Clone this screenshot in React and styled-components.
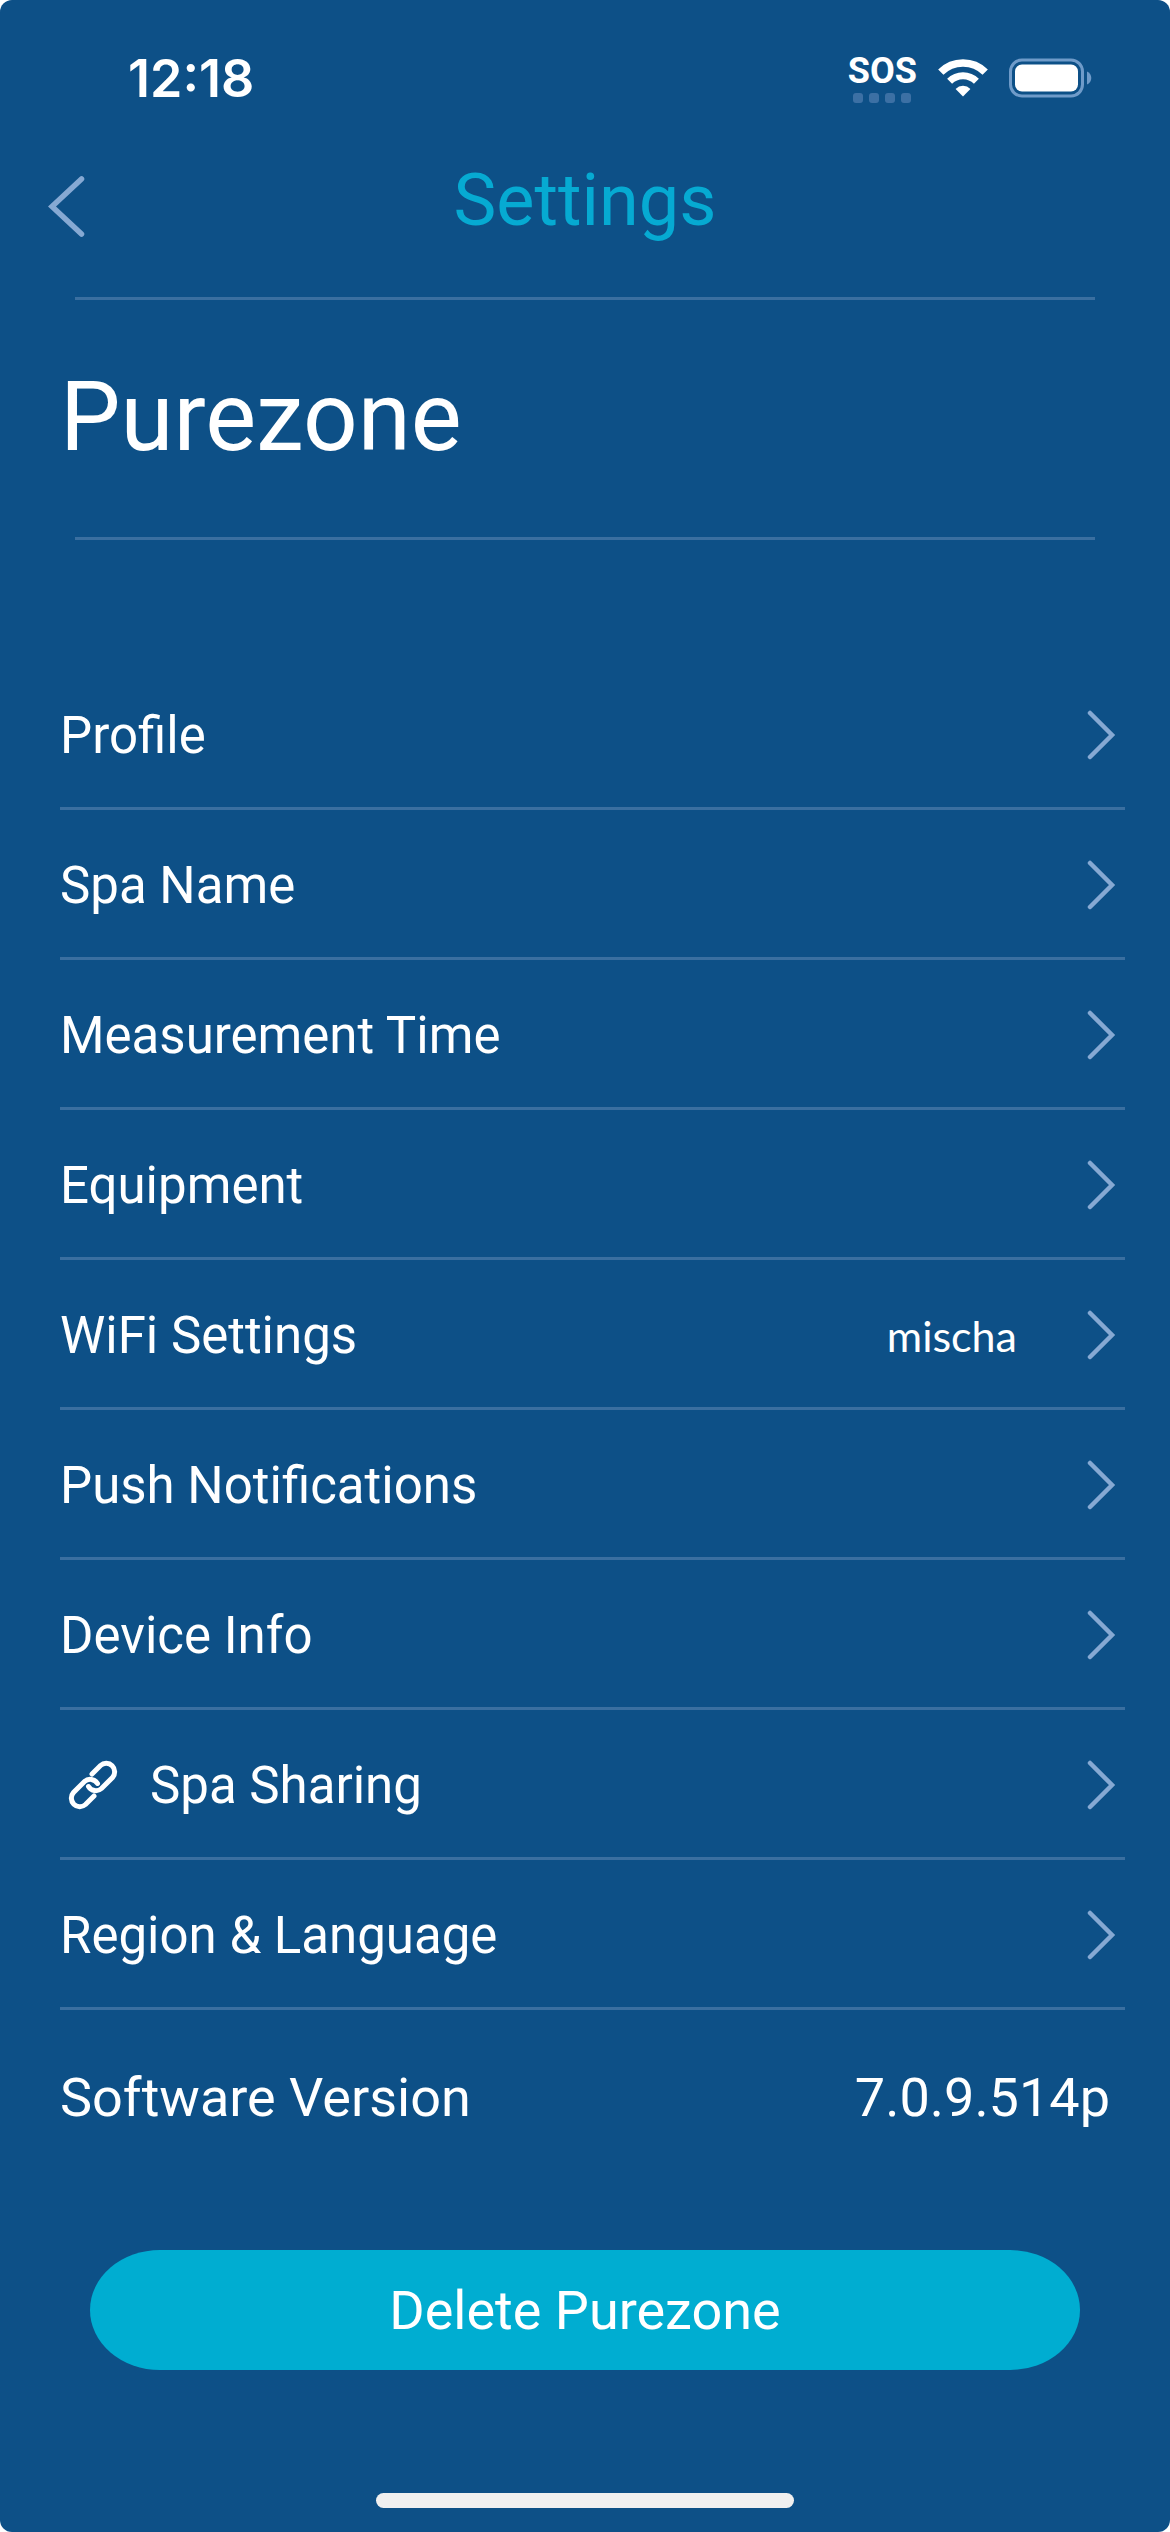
import React from 'react'
import styled, { createGlobalStyle } from 'styled-components'

const rows = [
  { id: 1, title: 'Profile' },
  { id: 2, title: 'Spa Name' },
  { id: 3, title: 'Measurement Time' },
  { id: 4, title: 'Equipment' },
  { id: 5, title: 'WiFi Settings', value: 'mischa' },
  { id: 6, title: 'Push Notifications' },
  { id: 7, title: 'Device Info' },
  { id: 8, title: 'Spa Sharing', shared: true },
  { id: 9, title: 'Region & Language' },
]

function WifiIcon() {
  return (
    <svg width="50" height="38" viewBox="0 0 50 38" fill="none" aria-hidden="true">
      <path d="M2.8 13.2a31.5 31.5 0 0 1 44.4 0" stroke="#fff" strokeWidth="7.5" />
      <path d="M11.6 22.2a19 19 0 0 1 26.8 0" stroke="#fff" strokeWidth="7" />
      <path d="M25 37.5l-7.4-7.6a10.4 10.4 0 0 1 14.8 0z" fill="#fff" />
    </svg>
  )
}

function BatteryIcon() {
  return (
    <svg width="83" height="40" viewBox="0 0 83 40" fill="none" aria-hidden="true">
      <rect x="1.5" y="2" width="72" height="36" rx="11.5" stroke="#6f9bc9" strokeWidth="3" />
      <rect x="6" y="6.5" width="63" height="27" rx="7" fill="#fff" />
      <path d="M78 13.5c2.6 1 4.3 3.6 4.3 6.5s-1.7 5.5-4.3 6.5z" fill="#6f9bc9" />
    </svg>
  )
}

function BackIcon() {
  return (
    <svg width="37" height="63" viewBox="0 0 37 63" fill="none" aria-hidden="true">
      <path d="M33.5 4L4 31.5 33.5 59" stroke="#86a9d3" strokeWidth="5.5" strokeLinecap="round" />
    </svg>
  )
}

function ChevronIcon() {
  return (
    <svg width="30" height="50" viewBox="0 0 30 50" fill="none" aria-hidden="true">
      <path d="M4 3L26 25 4 47" stroke="#86a9d3" strokeWidth="4.5" strokeLinecap="round" />
    </svg>
  )
}

function LinkIcon() {
  return (
    <svg width="50" height="50" viewBox="0 0 50 50" fill="none" aria-hidden="true">
      <g stroke="#fff" strokeWidth="5" strokeLinecap="round">
        <path d="M24 14L32.5 5.5A8.5 8.5 0 0 1 44.5 17.5L33.5 28.5A8.5 8.5 0 0 1 20.5 26.5" />
        <path d="M26 36L17.5 44.5A8.5 8.5 0 0 1 5.5 32.5L16.5 21.5A8.5 8.5 0 0 1 29.5 23.5" />
      </g>
    </svg>
  )
}

export default function App() {
  return (
    <>
      <GlobalStyle />
      <Screen>
        <StatusBar>
          <Time>12:18</Time>
          <StatusIcons>
            <Signal>
              <span>SOS</span>
              <Dots>
                <i /><i /><i /><i />
              </Dots>
            </Signal>
            <WifiIcon />
            <BatteryIcon />
          </StatusIcons>
        </StatusBar>
        <Header>
          <BackButton aria-label="Back">
            <BackIcon />
          </BackButton>
          <Title>Settings</Title>
        </Header>
        <SpaHeading>Purezone</SpaHeading>
        <List>
          {rows.map((row) => (
            <li key={row.id}>
              <Row>
                {row.shared && <LinkWrap><LinkIcon /></LinkWrap>}
                <Label>{row.title}</Label>
                {row.value && <Value>{row.value}</Value>}
                <ChevronIcon />
              </Row>
            </li>
          ))}
        </List>
        <Version>
          <span>Software Version</span>
          <span>7.0.9.514p</span>
        </Version>
        <DeleteButton>Delete Purezone</DeleteButton>
        <HomeBar />
      </Screen>
    </>
  )
}

const GlobalStyle = createGlobalStyle`
  * {
    box-sizing: border-box;
  }
  body {
    margin: 0;
    background: #fff;
  }
  button {
    border: 0;
    padding: 0;
    background: none;
    color: inherit;
    font-family: inherit;
    cursor: pointer;
  }
  svg {
    display: block;
    flex: none;
  }
`

const Screen = styled.div`
  display: flex;
  flex-direction: column;
  min-height: 100vh;
  border-radius: 12px;
  background: #0d5087;
  color: #fff;
  font-family: Roboto, sans-serif;
`

const StatusBar = styled.div`
  display: flex;
  justify-content: space-between;
  align-items: center;
  height: 156px;
  padding: 0 78px 0 128px;
`

const Time = styled.span`
  font-family: Inter, sans-serif;
  font-size: 52px;
  font-weight: 600;
`

const StatusIcons = styled.div`
  display: flex;
  align-items: center;
  gap: 21px;
`

const Signal = styled.div`
  display: flex;
  flex-direction: column;
  align-items: center;
  gap: 4px;
  font-size: 36px;
  font-weight: 700;
  line-height: 36px;
`

const Dots = styled.div`
  display: flex;
  gap: 6px;

  i {
    width: 10px;
    height: 10px;
    border-radius: 3px;
    background: #3c70a4;
  }
`

const Header = styled.header`
  display: grid;
  grid-template-columns: 60px 1fr 60px;
  align-items: center;
  height: 144px;
  padding: 0 48px 44px;
  background: linear-gradient(#3a6fa0, #3a6fa0) center bottom / calc(100% - 150px) 3px no-repeat;
`

const BackButton = styled.button`
  height: 100px;
`

const Title = styled.h1`
  margin: 0;
  padding-bottom: 12px;
  color: #06aad2;
  font-size: 72px;
  font-weight: 400;
  text-align: center;
`

const SpaHeading = styled.h2`
  display: flex;
  align-items: center;
  height: 240px;
  margin: 0;
  padding: 0 60px 6px;
  background: linear-gradient(#3a6fa0, #3a6fa0) center bottom / calc(100% - 150px) 3px no-repeat;
  font-size: 96px;
  font-weight: 400;
`

const List = styled.ul`
  margin: 0;
  padding: 120px 45px 0 60px;
  list-style: none;
`

const Row = styled.button`
  display: flex;
  align-items: center;
  width: 100%;
  height: 150px;
  padding: 3px 9px 0 0;
  border-bottom: 3px solid #3a6fa0;
  text-align: left;
`

const LinkWrap = styled.span`
  width: 90px;
  padding-left: 8px;
`

const Label = styled.span`
  flex: 1;
  font-size: 51px;
`

const Value = styled.span`
  margin-right: 69px;
  font-family: Lato, sans-serif;
  font-size: 43px;
`

const Version = styled.div`
  display: flex;
  justify-content: space-between;
  align-items: center;
  height: 174px;
  padding: 0 60px;
  font-size: 54px;
`

const DeleteButton = styled.button`
  height: 120px;
  margin: 66px 90px 0;
  border-radius: 70px / 60px;
  background: #00add1;
  font-size: 54px;
`

const HomeBar = styled.div`
  align-self: center;
  width: 418px;
  height: 15px;
  margin: auto 0 24px;
  border-radius: 8px;
  background: #f0f0f0;
`
